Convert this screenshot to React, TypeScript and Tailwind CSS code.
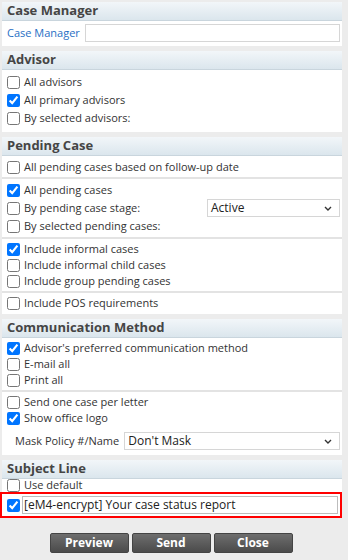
import React from "react";

interface CheckRowProps {
  label: string;
  checked?: boolean;
  h?: string;
}

function CheckRow({ label, checked, h = "h-[18px]" }: CheckRowProps) {
  return (
    <label className={`flex items-center gap-[4px] pl-[5px] ${h}`}>
      <input
        type="checkbox"
        defaultChecked={checked}
        className="m-0 w-[13px] h-[13px] accent-[#0075ff]"
      />
      <span className="text-[11px] text-[#333]">{label}</span>
    </label>
  );
}

function Chevron() {
  return (
    <svg width="8" height="5" viewBox="0 0 8 5" className="ml-auto mr-[7px]">
      <path d="M1 1 L4 4 L7 1" stroke="#333" strokeWidth="1.4" fill="none" />
    </svg>
  );
}

function FakeSelect({ value, className }: { value: string; className: string }) {
  return (
    <div
      className={`flex items-center h-[18px] bg-white border border-[#d6d6d6] pl-[3px] text-[12px] text-[#222] ${className}`}
    >
      {value}
      <Chevron />
    </div>
  );
}

function Panel({ title, children }: { title: string; children: React.ReactNode }) {
  return (
    <div className="bg-white">
      <div className="h-[19px] flex items-center pl-[5px] bg-gradient-to-b from-[#f2f6f9] to-[#dbe6ed] border-b border-[#c9d5dd] text-[13px] font-bold text-[#454545]">
        {title}
      </div>
      {children}
    </div>
  );
}

function Sep({ className = "my-[1px]" }: { className?: string }) {
  return <div className={`h-[2px] bg-[#e3e3e3] ${className}`} />;
}

export default function App() {
  return (
    <div
      className="w-[348px] h-[560px] bg-[#ececec] pt-[2px] pr-[6px] pl-[2px] flex flex-col"
      style={{ fontFamily: '"Open Sans", "Liberation Sans", sans-serif' }}
    >
      <div className="flex flex-col gap-[5px]">
        <Panel title="Case Manager">
          <div className="flex items-center pl-[5px] pr-[2px] pt-[3px] pb-[4px] gap-[5px]">
            <span className="text-[11px] text-[#1f6fc4]">Case Manager</span>
            <input
              type="text"
              className="flex-1 h-[18px] border border-[#d6d6d6] outline-none"
            />
          </div>
        </Panel>

        <Panel title="Advisor">
          <div className="pt-[3px] pb-[5px]">
            <CheckRow label="All advisors" />
            <CheckRow label="All primary advisors" checked />
            <CheckRow label="By selected advisors:" />
          </div>
        </Panel>

        <Panel title="Pending Case">
          <div className="pt-[2px] pb-[3px]">
            <CheckRow label="All pending cases based on follow-up date" />
            <Sep className="mt-[1px] mb-[2px]" />
            <CheckRow label="All pending cases" checked />
            <div className="flex items-center pr-[2px]">
              <div className="w-[205px]">
                <CheckRow label="By pending case stage:" />
              </div>
              <FakeSelect value="Active" className="flex-1" />
            </div>
            <CheckRow label="By selected pending cases:" />
            <Sep className="mt-[2px] mb-[2px]" />
            <CheckRow label="Include informal cases" checked h="h-[16px]" />
            <CheckRow label="Include informal child cases" h="h-[16px]" />
            <CheckRow label="Include group pending cases" h="h-[16px]" />
            <Sep className="my-[2px]" />
            <CheckRow label="Include POS requirements" h="h-[16px]" />
          </div>
        </Panel>

        <Panel title="Communication Method">
          <div className="pt-[2px] pb-[5px]">
            <CheckRow label="Advisor's preferred communication method" checked h="h-[16px]" />
            <CheckRow label="E-mail all" h="h-[16px]" />
            <CheckRow label="Print all" h="h-[16px]" />
            <Sep className="my-[2px]" />
            <CheckRow label="Send one case per letter" h="h-[16px]" />
            <CheckRow label="Show office logo" checked h="h-[16px]" />
            <div className="flex items-center pl-[13px] pr-[2px] mt-[6px] gap-[5px]">
              <span className="text-[11px] text-[#333]">Mask Policy #/Name</span>
              <FakeSelect value="Don't Mask" className="flex-1" />
            </div>
          </div>
        </Panel>

        <Panel title="Subject Line">
          <div>
            <CheckRow label="Use default" h="h-[13px]" />
            <div className="flex items-center gap-[2px] border-2 border-[#ff0000] -ml-[2px] pl-[5px] pr-[2px] h-[26px]">
              <input
                type="checkbox"
                defaultChecked
                className="m-0 w-[13px] h-[13px] accent-[#0075ff]"
              />
              <input
                type="text"
                defaultValue="[eM4-encrypt] Your case status report"
                className="flex-1 h-[18px] border border-[#bdbdbd] px-[1px] text-[12px] text-[#222] outline-none"
              />
            </div>
          </div>
        </Panel>
      </div>

      <div className="flex justify-center gap-[3px] mt-[15px] pr-[2px]">
        {["Preview", "Send", "Close"].map((b) => (
          <button
            key={b}
            className="w-[79px] h-[20px] rounded-[2px] bg-gradient-to-b from-[#6e6e6e] to-[#4b4b4b] border border-[#444] text-white text-[12px] font-bold"
          >
            {b}
          </button>
        ))}
      </div>
    </div>
  );
}
